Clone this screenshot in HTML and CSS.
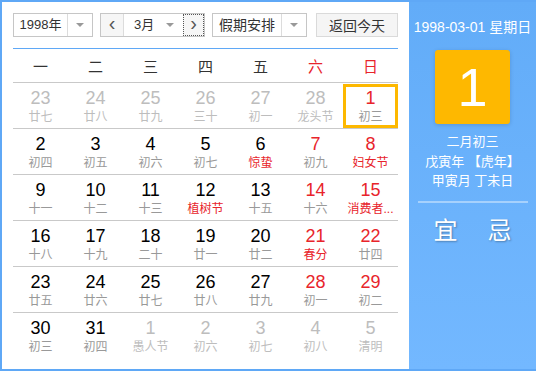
FILE: index.html
```html
<!DOCTYPE html>
<html lang="zh-CN">
<head>
  <meta charset="UTF-8">
  <title>万年历</title>
  <link rel="stylesheet" href="styles.css">
</head>
<body>
  <div class="calendar">
    <div class="main">
      <div class="toolbar">
        <div class="select year">
          <span class="select-val">1998年</span>
          <span class="select-arrow"></span>
        </div>
        <div class="select month">
          <span class="nav prev">&lsaquo;</span>
          <span class="select-val">3月<i class="tri"></i></span>
          <span class="nav next">&rsaquo;</span>
        </div>
        <div class="select holiday">
          <span class="select-val">假期安排</span>
          <span class="select-arrow"></span>
        </div>
        <button class="today">返回今天</button>
      </div>

      <div class="weekdays">
        <span>一</span><span>二</span><span>三</span><span>四</span><span>五</span>
        <span class="red">六</span><span class="red">日</span>
      </div>

      <div class="days">
        <div class="row">
          <div class="day other"><b>23</b><small>廿七</small></div>
          <div class="day other"><b>24</b><small>廿八</small></div>
          <div class="day other"><b>25</b><small>廿九</small></div>
          <div class="day other"><b>26</b><small>三十</small></div>
          <div class="day other"><b>27</b><small>初一</small></div>
          <div class="day other"><b>28</b><small>龙头节</small></div>
          <div class="day weekend selected"><b>1</b><small>初三</small></div>
        </div>
        <div class="row">
          <div class="day"><b>2</b><small>初四</small></div>
          <div class="day"><b>3</b><small>初五</small></div>
          <div class="day"><b>4</b><small>初六</small></div>
          <div class="day"><b>5</b><small>初七</small></div>
          <div class="day fest"><b>6</b><small>惊蛰</small></div>
          <div class="day weekend"><b>7</b><small>初九</small></div>
          <div class="day weekend fest"><b>8</b><small>妇女节</small></div>
        </div>
        <div class="row">
          <div class="day"><b>9</b><small>十一</small></div>
          <div class="day"><b>10</b><small>十二</small></div>
          <div class="day"><b>11</b><small>十三</small></div>
          <div class="day fest"><b>12</b><small>植树节</small></div>
          <div class="day"><b>13</b><small>十五</small></div>
          <div class="day weekend"><b>14</b><small>十六</small></div>
          <div class="day weekend fest"><b>15</b><small>消费者...</small></div>
        </div>
        <div class="row">
          <div class="day"><b>16</b><small>十八</small></div>
          <div class="day"><b>17</b><small>十九</small></div>
          <div class="day"><b>18</b><small>二十</small></div>
          <div class="day"><b>19</b><small>廿一</small></div>
          <div class="day"><b>20</b><small>廿二</small></div>
          <div class="day weekend fest"><b>21</b><small>春分</small></div>
          <div class="day weekend"><b>22</b><small>廿四</small></div>
        </div>
        <div class="row">
          <div class="day"><b>23</b><small>廿五</small></div>
          <div class="day"><b>24</b><small>廿六</small></div>
          <div class="day"><b>25</b><small>廿七</small></div>
          <div class="day"><b>26</b><small>廿八</small></div>
          <div class="day"><b>27</b><small>廿九</small></div>
          <div class="day weekend"><b>28</b><small>初一</small></div>
          <div class="day weekend"><b>29</b><small>初二</small></div>
        </div>
        <div class="row last">
          <div class="day"><b>30</b><small>初三</small></div>
          <div class="day"><b>31</b><small>初四</small></div>
          <div class="day other"><b>1</b><small>愚人节</small></div>
          <div class="day other"><b>2</b><small>初六</small></div>
          <div class="day other"><b>3</b><small>初七</small></div>
          <div class="day other"><b>4</b><small>初八</small></div>
          <div class="day other"><b>5</b><small>清明</small></div>
        </div>
      </div>
    </div>

    <div class="side">
      <div class="side-date">1998-03-01 星期日</div>
      <div class="big-day">1</div>
      <div class="lunar">
        <p>二月初三</p>
        <p>戊寅年 【虎年】</p>
        <p>甲寅月 丁未日</p>
      </div>
      <div class="yiji">
        <span>宜</span>
        <span>忌</span>
      </div>
    </div>
  </div>
</body>
</html>
```

FILE: styles.css
```css
body {
  margin: 0;
  font-family: "Liberation Sans", "Noto Sans CJK SC", sans-serif;
}
.calendar {
  display: flex;
  width: 536px;
  height: 371px;
  box-sizing: border-box;
  border: 2px solid #5fa8f6;
  border-right: 0;
}
.main {
  width: 385px;
  padding: 11px 11px 0;
  background: #fff;
}

/* toolbar */
.toolbar {
  display: flex;
  height: 24px;
  padding-bottom: 11px;
  border-bottom: 1px solid #5fa8f6;
}
.select {
  display: flex;
  height: 24px;
  box-sizing: border-box;
  border: 1px solid #c6c6c6;
  color: #333;
  font-size: 13px;
}
.select-val {
  flex: 1;
  line-height: 22px;
  text-align: center;
  white-space: nowrap;
}
.select-arrow {
  width: 24px;
  border-left: 1px solid #dcdcdc;
  position: relative;
}
.select-arrow::after,
.tri {
  content: "";
  display: inline-block;
  border: 4px solid transparent;
  border-top: 4px solid #999;
  border-bottom: 0;
}
.select-arrow::after {
  position: absolute;
  left: 8px;
  top: 9px;
}
.year {
  width: 80px;
}
.month {
  width: 105px;
  margin-left: 7px;
}
.month .select-val {
  text-align: left;
  padding-left: 10px;
}
.tri {
  margin-left: 12px;
  vertical-align: 2px;
}
.nav {
  width: 22px;
  background: #f6f6f6;
  color: #555;
  font-size: 20px;
  line-height: 19px;
  text-align: center;
}
.prev {
  border-right: 1px solid #dcdcdc;
}
.next {
  width: 21px;
  outline: 1px dotted #555;
  outline-offset: -1px;
}
.holiday {
  width: 95px;
  margin-left: 7px;
}
.holiday .select-val {
  font-size: 14px;
}
.today {
  width: 82px;
  height: 24px;
  margin-left: 9px;
  padding: 0;
  border: 1px solid #dadada;
  background: #f5f5f5;
  color: #333;
  font-family: inherit;
  font-size: 14px;
}

/* grid */
.weekdays,
.row {
  display: grid;
  grid-template-columns: repeat(7, 55px);
  border-bottom: 1px solid #c9c9c9;
}
.weekdays {
  height: 33px;
  line-height: 36px;
  text-align: center;
  font-size: 15px;
  color: #333;
}
.red {
  color: #e8242b;
}
.row {
  height: 45px;
}
.row.last {
  border-bottom: 0;
}
.day {
  display: flex;
  flex-direction: column;
  align-items: center;
  padding-top: 6px;
  box-sizing: border-box;
}
.day b {
  font-weight: normal;
  font-size: 18px;
  line-height: 19px;
  color: #000;
}
.day small {
  font-size: 12px;
  line-height: 18px;
  color: #999;
}
.day.weekend b,
.day.fest small {
  color: #e8242b;
}
.day.other b,
.day.other small {
  color: #bdbdbd;
}
.day.selected {
  height: 44px;
  margin-top: 1px;
  padding-top: 2px;
  border: 3px solid #fdb800;
}

/* side panel */
.side {
  flex: 1;
  background: linear-gradient(#62acf8, #73b8ff);
  color: #fff;
  text-align: center;
}
.side-date {
  margin-top: 16px;
  font-size: 14px;
  line-height: 18px;
}
.big-day {
  width: 75px;
  height: 74px;
  margin: 14px auto 0;
  border-radius: 3px;
  background: #feb800;
  box-shadow: 0 1px 4px rgba(0, 0, 0, 0.15);
  font-size: 54px;
  line-height: 74px;
}
.lunar {
  width: 110px;
  margin: 8px auto 0;
  padding-bottom: 10px;
  border-bottom: 2px solid rgba(255, 255, 255, 0.4);
}
.lunar p {
  margin: 0;
  font-size: 13px;
  line-height: 19.5px;
}
.yiji {
  display: flex;
  justify-content: center;
  gap: 30px;
  margin-top: 14px;
  font-size: 24px;
  line-height: 28px;
  text-shadow: 1px 1px 2px rgba(0, 0, 0, 0.3);
}
```
